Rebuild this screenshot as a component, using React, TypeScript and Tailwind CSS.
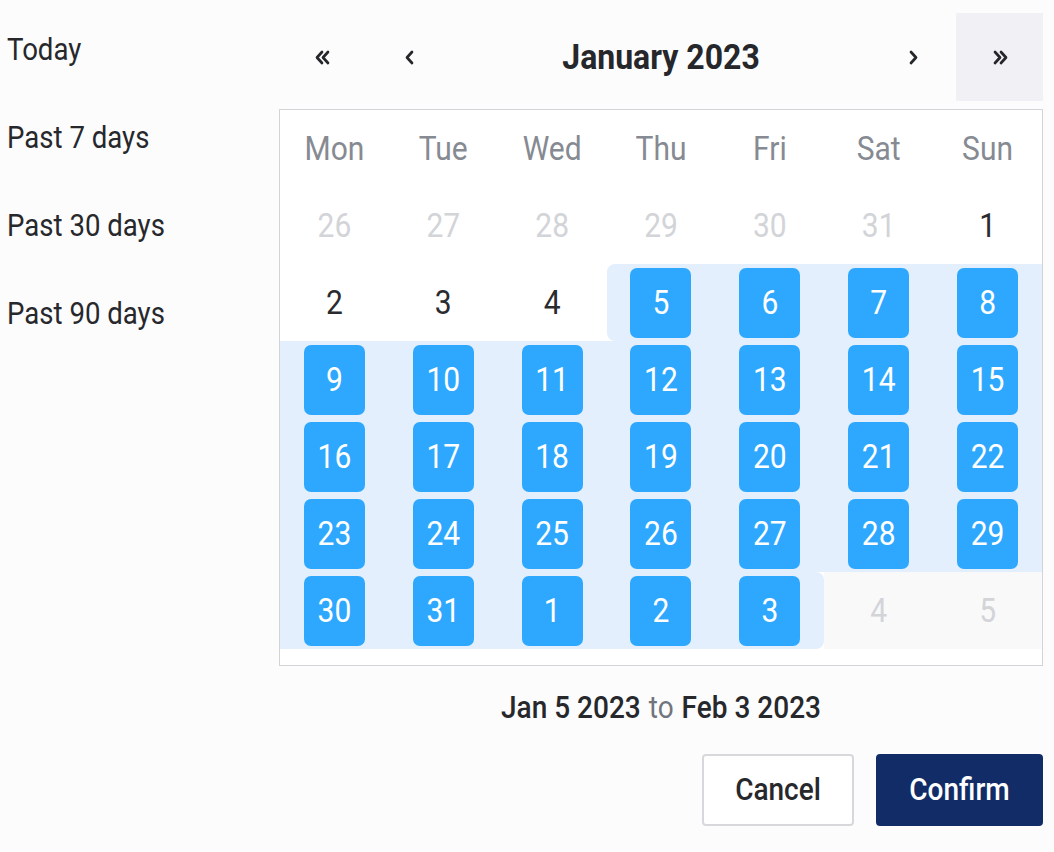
import React from "react";

type Day = { n: number; kind: "prev" | "normal" | "sel" | "off"; first?: boolean; last?: boolean };

const weeks: Day[][] = [
  [26, 27, 28, 29, 30, 31].map((n) => ({ n, kind: "prev" as const })).concat([{ n: 1, kind: "normal" }]),
  [
    { n: 2, kind: "normal" },
    { n: 3, kind: "normal" },
    { n: 4, kind: "normal" },
    { n: 5, kind: "sel", first: true },
    { n: 6, kind: "sel" },
    { n: 7, kind: "sel" },
    { n: 8, kind: "sel" },
  ],
  [9, 10, 11, 12, 13, 14, 15].map((n) => ({ n, kind: "sel" as const })),
  [16, 17, 18, 19, 20, 21, 22].map((n) => ({ n, kind: "sel" as const })),
  [23, 24, 25, 26, 27, 28, 29].map((n) => ({ n, kind: "sel" as const })),
  [
    { n: 30, kind: "sel" },
    { n: 31, kind: "sel" },
    { n: 1, kind: "sel" },
    { n: 2, kind: "sel" },
    { n: 3, kind: "sel", last: true },
    { n: 4, kind: "off" },
    { n: 5, kind: "off" },
  ],
];

const dayNames = ["Mon", "Tue", "Wed", "Thu", "Fri", "Sat", "Sun"];
const presets = ["Today", "Past 7 days", "Past 30 days", "Past 90 days"];

// the screenshot's glyphs are a touch taller than wide
const T = ({ children, className = "" }: { children: React.ReactNode; className?: string }) => (
  <span className={`inline-block scale-y-[1.12] ${className}`}>{children}</span>
);

const Chevron = ({ dir, double }: { dir: "left" | "right"; double?: boolean }) => {
  const flip = dir === "right" ? "scale(-1,1) translate(-18,0)" : undefined;
  return (
    <svg width="18" height="15" viewBox="0 0 18 15" fill="none" stroke="#26272b" strokeWidth="2.7" strokeLinecap="round" strokeLinejoin="round">
      <g transform={flip}>
        {double ? (
          <>
            <path d="M8 2 L3 7.5 L8 13" />
            <path d="M14 2 L9 7.5 L14 13" />
          </>
        ) : (
          <path d="M11 2 L6 7.5 L11 13" />
        )}
      </g>
    </svg>
  );
};

const Cell = ({ d }: { d: Day }) => {
  let bg = "";
  if (d.kind === "sel") {
    bg = "bg-[#e3effc]";
    if (d.first) bg += " rounded-l-[8px]";
    if (d.last) bg += " rounded-r-[8px]";
  } else if (d.kind === "off") {
    bg = "bg-[#f9f9fa]";
  }
  return (
    <div className={`h-[77px] flex items-center justify-center ${bg}`}>
      {d.kind === "sel" ? (
        <div className="w-[61px] h-[70px] rounded-[7px] bg-[#2ea8ff] text-white flex items-center justify-center">
          <T>{d.n}</T>
        </div>
      ) : (
        <T className={d.kind === "normal" ? "text-[#2a2b2f]" : "text-[#d2d4d8]"}>{d.n}</T>
      )}
    </div>
  );
};

const App = () => {
  return (
    <div className="min-h-screen bg-[#fcfcfd] flex font-['Roboto',sans-serif] text-[#27282c]">
      <div className="w-[279px] pt-[6px] pl-[7px] flex flex-col">
        {presets.map((p) => (
          <div key={p} className="h-[88px] flex items-center text-[27.6px]">
            <T>{p}</T>
          </div>
        ))}
      </div>

      <div className="w-[764px] pt-[13px] flex flex-col">
        <div className="h-[88px] flex">
          <button className="w-[87px] flex items-center justify-center">
            <Chevron dir="left" double />
          </button>
          <button className="w-[87px] flex items-center justify-center">
            <Chevron dir="left" />
          </button>
          <div className="flex-1 flex items-center justify-center text-[32px] font-bold text-[#26272b]">
            <T>January 2023</T>
          </div>
          <button className="w-[87px] flex items-center justify-center">
            <Chevron dir="right" />
          </button>
          <button className="w-[87px] flex items-center justify-center bg-[#f1f1f5]">
            <Chevron dir="right" double />
          </button>
        </div>

        <div className="mt-[8px] border border-[#d4d4d8] bg-white pb-[16px]">
          <div className="grid grid-cols-7 text-[30px]">
            {dayNames.map((n) => (
              <div key={n} className="h-[77px] flex items-center justify-center text-[#868a92]">
                <T>{n}</T>
              </div>
            ))}
            {weeks.flat().map((d, i) => (
              <Cell key={i} d={d} />
            ))}
          </div>
        </div>

        <div className="mt-[26px] h-[32px] flex items-center justify-center text-[28px] font-medium text-[#27282c]">
          <T>Jan 5 2023</T>
          <T className="font-normal text-[#72757d] mx-[8px]">to</T>
          <T>Feb 3 2023</T>
        </div>

        <div className="mt-[30px] flex justify-end gap-[22px]">
          <button className="w-[152px] h-[72px] rounded-[4px] border-2 border-[#d8d8dc] bg-white text-[28px] font-medium text-[#27282c]">
            <T>Cancel</T>
          </button>
          <button className="w-[167px] h-[72px] rounded-[4px] bg-[#112c66] text-[28px] font-medium text-white">
            <T>Confirm</T>
          </button>
        </div>
      </div>
    </div>
  );
};

export default App;
